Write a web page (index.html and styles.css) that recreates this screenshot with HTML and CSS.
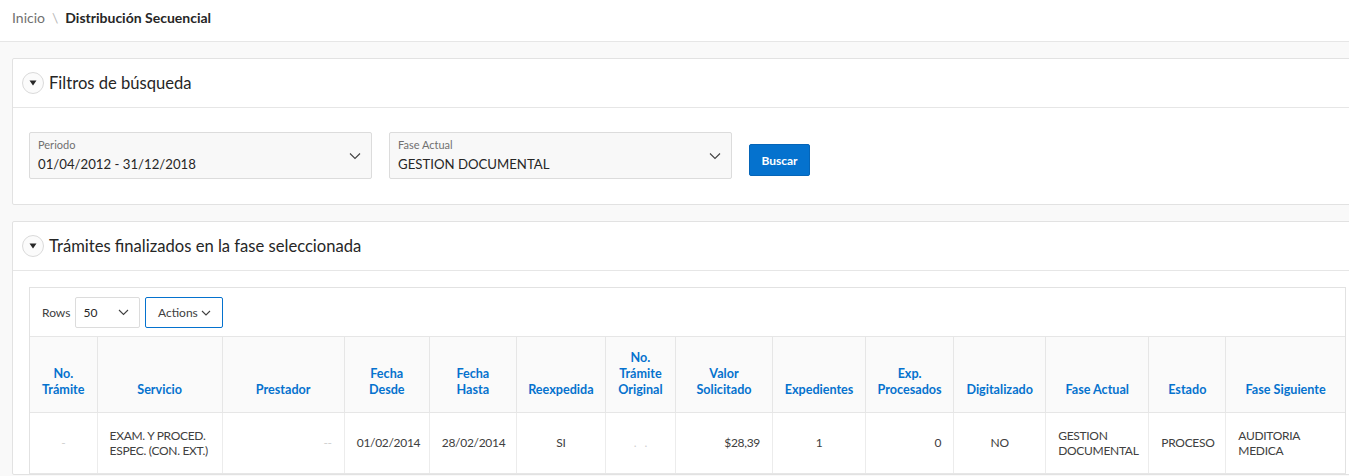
FILE: index.html
```html
<!DOCTYPE html>
<html lang="es">
<head>
<meta charset="utf-8">
<title>Distribución Secuencial</title>
<link rel="stylesheet" href="styles.css">
</head>
<body>
<div class="topbar">
  <nav class="crumbs">
    <span class="crumb">Inicio</span>
    <span class="sep">\</span>
    <span class="crumb current">Distribución Secuencial</span>
  </nav>
</div>
<main class="main">
  <section class="region">
    <header class="region-header">
      <span class="toggle"><svg width="8" height="6" viewBox="0 0 8 6"><path d="M0.5 0.5 L7.5 0.5 L4 5.5 Z" fill="#262626"/></svg></span>
      <h2 class="region-title">Filtros de búsqueda</h2>
    </header>
    <div class="filters">
      <div class="field">
        <div class="field-text">
          <span class="field-label">Periodo</span>
          <span class="field-value">01/04/2012 - 31/12/2018</span>
        </div>
        <svg class="chev" width="12" height="8" viewBox="0 0 12 8"><polyline points="1,1.5 6,6.5 11,1.5" fill="none" stroke="#404040" stroke-width="1.1"/></svg>
      </div>
      <div class="field">
        <div class="field-text">
          <span class="field-label">Fase Actual</span>
          <span class="field-value">GESTION DOCUMENTAL</span>
        </div>
        <svg class="chev" width="12" height="8" viewBox="0 0 12 8"><polyline points="1,1.5 6,6.5 11,1.5" fill="none" stroke="#404040" stroke-width="1.1"/></svg>
      </div>
      <button class="btn-primary">Buscar</button>
    </div>
  </section>

  <section class="region">
    <header class="region-header">
      <span class="toggle"><svg width="8" height="6" viewBox="0 0 8 6"><path d="M0.5 0.5 L7.5 0.5 L4 5.5 Z" fill="#262626"/></svg></span>
      <h2 class="region-title">Trámites finalizados en la fase seleccionada</h2>
    </header>
    <div class="region-body">
      <div class="ir">
        <div class="toolbar">
          <span class="rows-label">Rows</span>
          <div class="rows-select">
            <span>50</span>
            <svg width="11" height="7" viewBox="0 0 11 7"><polyline points="1,1 5.5,5.5 10,1" fill="none" stroke="#404040" stroke-width="1.1"/></svg>
          </div>
          <button class="btn-actions">Actions
            <svg width="10" height="6" viewBox="0 0 10 6"><polyline points="1,1 5,5 9,1" fill="none" stroke="#404040" stroke-width="1.1"/></svg>
          </button>
        </div>
        <table class="report">
          <colgroup>
            <col class="c67"><col class="c125"><col class="c122"><col class="c85"><col class="c87"><col class="c89"><col class="c70"><col class="c97"><col class="c93"><col class="c88"><col class="c92"><col class="c103"><col class="c77"><col class="c119">
          </colgroup>
          <thead>
            <tr>
              <th>No.<br>Trámite</th>
              <th>Servicio</th>
              <th>Prestador</th>
              <th>Fecha<br>Desde</th>
              <th>Fecha<br>Hasta</th>
              <th>Reexpedida</th>
              <th>No.<br>Trámite<br>Original</th>
              <th>Valor<br>Solicitado</th>
              <th>Expedientes</th>
              <th>Exp.<br>Procesados</th>
              <th>Digitalizado</th>
              <th>Fase Actual</th>
              <th>Estado</th>
              <th>Fase Siguiente</th>
            </tr>
          </thead>
          <tbody>
            <tr>
              <td class="center faint">-</td>
              <td>EXAM. Y PROCED.<br>ESPEC. (CON. EXT.)</td>
              <td class="right faint">--</td>
              <td class="center">01/02/2014</td>
              <td class="center">28/02/2014</td>
              <td class="center">SI</td>
              <td class="center faint">. &nbsp; .</td>
              <td class="right">$28,39</td>
              <td class="center">1</td>
              <td class="right">0</td>
              <td class="center">NO</td>
              <td>GESTION<br>DOCUMENTAL</td>
              <td>PROCESO</td>
              <td>AUDITORIA<br>MEDICA</td>
            </tr>
          </tbody>
        </table>
      </div>
    </div>
  </section>
</main>
</body>
</html>
```

FILE: styles.css
```css
* { box-sizing: border-box; }
html, body { margin: 0; padding: 0; }
body {
  font-family: "Lato", "Open Sans", sans-serif;
  background: #f9f9f9;
  color: #404040;
  overflow: hidden;
  width: 1349px;
  height: 476px;
}
.topbar {
  height: 42px;
  background: #fff;
  border-bottom: 1px solid #e6e6e6;
  padding-left: 12px;
  display: flex;
  align-items: center;
}
.crumbs { font-size: 14px; display: flex; align-items: center; margin-top: -7px; }
.crumb { color: #707070; }
.crumb.current { color: #262626; font-weight: 700; }
.sep { color: #b8b8b8; margin: 0 7px 0 7px; }

.main {
  padding: 16px 0 0 12px;
  display: flex;
  flex-direction: column;
  gap: 16px;
  width: 1400px;
}
.region {
  width: 1350px;
  background: #fff;
  border: 1px solid #e2e2e2;
  border-radius: 2px;
}
.region-header {
  height: 49px;
  border-bottom: 1px solid #e6e6e6;
  display: flex;
  align-items: center;
  padding-left: 9px;
}
.toggle {
  width: 22px;
  height: 22px;
  border-radius: 50%;
  border: 1px solid #dadada;
  background: #fbfbfb;
  display: flex;
  align-items: center;
  justify-content: center;
}
.region-title {
  margin: 0 0 0 5px;
  font-size: 16.6px;
  font-weight: 400;
  color: #262626;
}
.filters {
  padding: 24px 16px 25px 16px;
  display: flex;
  align-items: flex-start;
  gap: 17px;
}
.field {
  width: 343px;
  height: 47px;
  background: #f8f8f8;
  border: 1px solid #dcdcdc;
  border-radius: 2px;
  display: flex;
  align-items: center;
  justify-content: space-between;
  padding: 0 10px 0 8px;
}
.field-text { display: flex; flex-direction: column; }
.field-label { font-size: 11px; color: #707070; line-height: 14px; margin-top: 0; }
.field-value { font-size: 13.2px; color: #262626; line-height: 18px; margin-top: 3px; }
.chev { margin-top: 0; }
.btn-primary {
  font-family: inherit;
  margin-top: 12px;
  height: 32px;
  width: 61px;
  background: #0572ce;
  color: #fff;
  border: 1px solid #0565b8;
  border-radius: 2px;
  font-size: 12px;
  font-weight: 700;
  padding: 0;
}

.region-body { padding: 16px 16px 0 16px; }
.ir {
  width: 1317px;
  border: 1px solid #e2e2e2;
  border-bottom: 1px solid #e6e6e6;
}
.toolbar {
  height: 49px;
  border-bottom: 1px solid #e6e6e6;
  display: flex;
  align-items: center;
  padding-left: 12px;
  padding-top: 1px;
  gap: 5px;
}
.rows-label { font-size: 12px; color: #404040; }
.rows-select {
  width: 65px;
  height: 31px;
  border: 1px solid #dcdcdc;
  border-radius: 2px;
  display: flex;
  align-items: center;
  justify-content: space-between;
  padding: 0 10px 0 7px;
  font-size: 12px;
  color: #262626;
}
.btn-actions {
  font-family: inherit;
  width: 78px;
  height: 31px;
  border: 1px solid #0572ce;
  border-radius: 2px;
  background: #fff;
  color: #404040;
  font-size: 12px;
  display: flex;
  align-items: center;
  justify-content: center;
  gap: 3px;
  padding: 0;
}

.report {
  border-collapse: collapse;
  table-layout: fixed;
  width: 1315px;
}
.c67 { width: 67px; } .c125 { width: 125px; } .c122 { width: 122px; } .c85 { width: 85px; }
.c87 { width: 87px; } .c89 { width: 89px; } .c70 { width: 70px; } .c97 { width: 97px; }
.c93 { width: 93px; } .c88 { width: 88px; } .c92 { width: 92px; } .c103 { width: 103px; }
.c77 { width: 77px; } .c119 { width: 119px; }
.report th {
  background: #fafafa;
  color: #0572ce;
  font-size: 12.6px;
  font-weight: 700;
  line-height: 16px;
  text-align: center;
  vertical-align: bottom;
  height: 75px;
  padding: 8px 2px 14px 2px;
  border-left: 1px solid #e6e6e6;
  border-bottom: 1px solid #e6e6e6;
}
.report th:first-child, .report td:first-child { border-left: none; }
.report td {
  font-size: 12px;
  letter-spacing: -0.3px;
  line-height: 15px;
  color: #404040;
  height: 61px;
  padding: 8px 12px;
  border-left: 1px solid #ececec;
  vertical-align: middle;
  white-space: nowrap;
}
.report td.center { text-align: center; }
.report td.right { text-align: right; }
.report td.faint { color: #d0d0d0; }
```
